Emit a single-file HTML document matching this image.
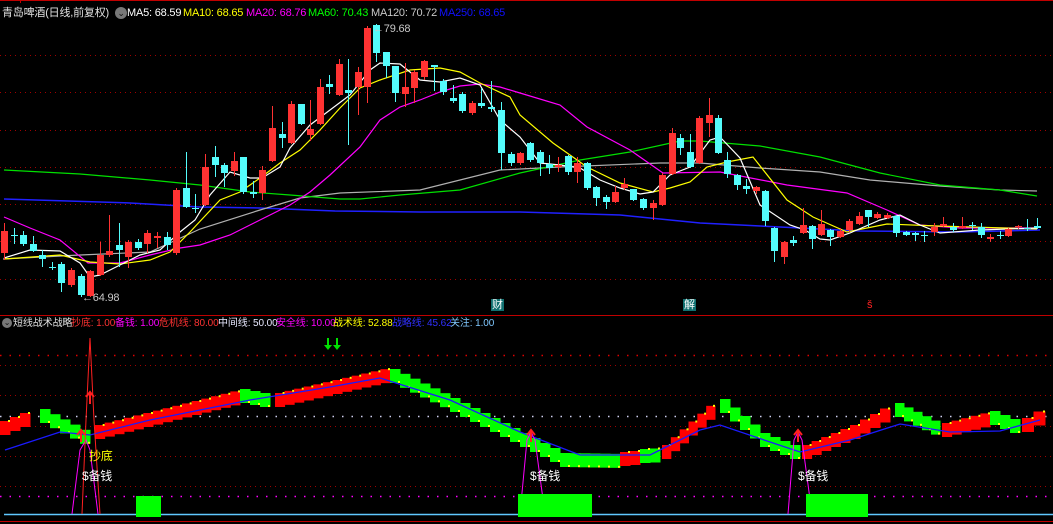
<!DOCTYPE html>
<html><head><meta charset="utf-8"><style>
html,body{margin:0;padding:0;background:#000;}
#w{position:relative;width:1053px;height:524px;overflow:hidden;background:#000;font-family:"Liberation Sans","Noto Sans CJK SC",sans-serif;font-size:11px;}
.t{position:absolute;white-space:nowrap;line-height:13px;letter-spacing:-0.2px;}
.b{font-size:10px;letter-spacing:-0.1px;}
svg{position:absolute;left:0;top:0;}
</style></head><body><div id="w">
<svg id="s" width="1053" height="524" viewBox="0 0 1053 524">
<line x1="0" y1="0.5" x2="1053" y2="0.5" stroke="#c00000"/>
<line x1="20.5" y1="0" x2="20.5" y2="3" stroke="#c00000"/>
<line x1="0" y1="315.5" x2="1053" y2="315.5" stroke="#c00000"/>
<line x1="0" y1="521.5" x2="1053" y2="521.5" stroke="#c00000"/>
<g stroke="#a00000" stroke-dasharray="1,4">
<line x1="0" y1="55.5" x2="1053" y2="55.5"/><line x1="0" y1="92.5" x2="1053" y2="92.5"/>
<line x1="0" y1="130.5" x2="1053" y2="130.5"/><line x1="0" y1="167.5" x2="1053" y2="167.5"/>
<line x1="0" y1="204.5" x2="1053" y2="204.5"/><line x1="0" y1="241.5" x2="1053" y2="241.5"/>
<line x1="0" y1="279.5" x2="1053" y2="279.5"/>
<line x1="0" y1="365.5" x2="1053" y2="365.5"/><line x1="0" y1="395.5" x2="1053" y2="395.5"/>
<line x1="0" y1="426.5" x2="1053" y2="426.5"/><line x1="0" y1="456.5" x2="1053" y2="456.5"/>
<line x1="0" y1="486.5" x2="1053" y2="486.5"/>
</g>
<line x1="0" y1="355.5" x2="1053" y2="355.5" stroke="#e00000" stroke-width="1.5" stroke-dasharray="1.5,8"/>
<line x1="0" y1="416.5" x2="1053" y2="416.5" stroke="#d0d0f0" stroke-width="1.5" stroke-dasharray="1.5,8"/>
<line x1="0" y1="496.5" x2="1053" y2="496.5" stroke="#ff00ff" stroke-width="1.5" stroke-dasharray="1.5,8"/>
<line x1="4" y1="514.5" x2="1053" y2="514.5" stroke="#60c8ff" stroke-width="1.5"/>
<g fill="#00e000"><path d="M327 338h2v7h3l-4 5-4-5h3z"/><path d="M336 338h2v7h3l-4 5-4-5h3z"/></g>
<g id="ma" fill="none" stroke-width="1.2"></g>
<g id="cd"></g>
<g id="bd"></g>
</svg>
<div class="t" style="left:2px;top:7px;color:#e0e0e0">青岛啤酒(日线,前复权)</div>
<div class="t" style="left:115px;top:7px;width:12px;height:12px;border-radius:6px;background:#777;color:#111;font-size:9px;text-align:center;line-height:12px">⌄</div>
<div class="t" style="left:127px;top:7px;color:#fff">MA5: 68.59</div>
<div class="t" style="left:183px;top:7px;color:#ff0">MA10: 68.65</div>
<div class="t" style="left:246px;top:7px;color:#f0f">MA20: 68.76</div>
<div class="t" style="left:308px;top:7px;color:#0f0">MA60: 70.43</div>
<div class="t" style="left:371px;top:7px;color:#c8c8c8">MA120: 70.72</div>
<div class="t" style="left:439px;top:7px;color:#1010ff">MA250: 68.65</div>
<div class="t" style="left:373px;top:23px;color:#c8c8c8">←79.68</div>
<div class="t" style="left:82px;top:292px;color:#c8c8c8">←64.98</div>
<div class="t" style="left:491px;top:299px;background:#107070;color:#fff;font-size:11px;line-height:12px;padding:0 1px">财</div>
<div class="t" style="left:683px;top:299px;background:#107070;color:#fff;font-size:11px;line-height:12px;padding:0 1px">解</div>
<div class="t" style="left:867px;top:299px;color:#f22;font-size:11px;line-height:12px">š</div>
<div class="t" style="left:2px;top:318px;width:10px;height:10px;border-radius:5px;background:#777;color:#111;font-size:8px;text-align:center;line-height:10px">⌄</div>
<div class="t b" style="left:13px;top:317px;color:#e0e0e0">短线战术战略</div>
<div class="t b" style="left:71px;top:317px;color:#ff3232">抄底: 1.00</div>
<div class="t b" style="left:115px;top:317px;color:#ff00ff">备钱: 1.00</div>
<div class="t b" style="left:159px;top:317px;color:#ff3232">危机线: 80.00</div>
<div class="t b" style="left:218px;top:317px;color:#e8e8ff">中间线: 50.00</div>
<div class="t b" style="left:276px;top:317px;color:#ff00ff">安全线: 10.00</div>
<div class="t b" style="left:333px;top:317px;color:#ff0">战术线: 52.88</div>
<div class="t b" style="left:392px;top:317px;color:#3030ff">战略线: 45.62</div>
<div class="t b" style="left:450px;top:317px;color:#80c8ff">关注: 1.00</div>
<div class="t" style="left:89px;top:450px;color:#ff0;font-size:12px">抄底</div>
<div class="t" style="left:82px;top:470px;color:#fff;font-size:12px">$备钱</div>
<div class="t" style="left:530px;top:470px;color:#fff;font-size:12px">$备钱</div>
<div class="t" style="left:798px;top:470px;color:#fff;font-size:12px">$备钱</div>
</div>
<script>
var NS="http://www.w3.org/2000/svg";
function el(p,t,a){var e=document.createElementNS(NS,t);for(var k in a)e.setAttribute(k,a[k]);p.appendChild(e);return e;}
var ma=document.getElementById('ma'),cd=document.getElementById('cd'),bd=document.getElementById('bd');
function pl(col,pts,w){el(ma,'polyline',{points:pts,stroke:col,'stroke-width':w||1.2});}
pl('#2020ff','4,199 130,203 200,207 260,208 335,211 420,212 520,212 620,215 700,223 780,227 860,231 960,232 1040,230',1.5);
pl('#b0b0b0','3,259 80,255 150,252 200,229 260,210 300,198 340,193 420,190 500,170 560,167 660,163 700,163 760,168 820,172 870,180 940,186 1000,190 1037,191');
pl('#00e000','4,170 80,174 150,180 200,185 250,192 290,195 340,199 360,199 400,195 460,190 520,173 580,160 630,152 680,141 700,141 760,146 820,157 880,173 940,185 1000,190 1037,196');
pl('#ff00ff','4,217 30,228 60,240 88,263 120,263 150,255 180,248 200,245 230,235 260,220 290,205 310,192 330,175 360,147 380,120 400,107 420,100 440,92 460,86 480,84 500,87 520,93 560,105 587,127 630,150 663,173 720,172 787,185 847,193 887,210 920,225 960,228 1037,228');
pl('#ffff00','4,259 60,255 90,262 120,264 150,260 170,252 190,232 220,200 240,192 260,178 280,163 300,150 320,130 340,108 360,88 380,80 410,70 440,68 460,72 480,83 510,97 520,115 553,143 587,167 620,183 653,192 670,188 690,182 707,167 727,162 753,157 787,200 813,217 847,232 887,224 937,226 1037,229');
pl('#ffffff','4,258 30,250 60,251 80,263 90,277 100,275 120,265 140,255 160,250 180,232 195,220 210,195 230,172 250,178 262,178 280,167 290,148 310,125 330,110 350,95 370,70 380,63 400,64 420,80 440,82 460,78 480,85 500,120 520,137 540,163 560,165 580,168 600,180 620,188 640,194 653,192 670,175 690,167 710,140 720,137 740,158 760,205 790,225 805,230 820,239 830,240 850,233 880,220 900,215 920,225 940,233 980,230 1037,228');
var C=[[4,231,253,223,260,1],[14,235,236,228,244,0],[23,235,244,231,246,0],[33,244,251,236,252,0],[42,255,259,250,267,0],[52,267,268,262,270,0],[61,264,283,262,292,0],[71,270,285,268,287,1],[81,276,295,274,297,0],[90,271,296,270,297,1],[100,255,275,242,276,1],[109,251,255,215,257,1],[119,245,250,223,267,0],[128,242,257,240,268,1],[138,242,248,239,250,0],[147,233,244,230,253,1],[157,236,238,232,248,1],[167,237,245,232,250,0],[176,190,253,188,255,1],[186,188,207,152,208,0],[195,208,209,194,213,0],[205,167,205,154,206,1],[215,157,165,146,177,0],[224,165,173,163,187,0],[234,161,171,152,176,1],[243,157,192,157,194,0],[253,192,194,181,198,0],[262,170,193,166,200,1],[272,128,161,106,162,1],[282,134,138,122,148,0],[291,104,143,101,144,1],[301,104,124,104,125,0],[310,129,135,100,141,1],[320,87,124,79,125,1],[329,84,87,75,94,0],[339,64,95,59,96,1],[348,90,93,59,145,0],[358,72,87,67,115,1],[367,28,87,26,103,1],[376,25,53,24,62,0],[386,52,66,52,78,0],[395,66,93,66,102,0],[405,87,94,63,107,1],[414,72,88,70,103,1],[424,61,77,60,80,1],[434,65,67,65,91,0],[443,81,92,79,95,0],[453,98,101,85,103,0],[462,94,111,92,113,0],[472,103,113,101,115,1],[481,103,106,88,108,0],[491,107,109,81,112,0],[501,110,153,102,170,0],[511,154,163,152,166,0],[520,153,163,152,165,1],[530,143,160,142,162,0],[540,152,163,150,176,0],[549,164,168,155,174,0],[558,165,167,157,172,1],[568,156,172,155,175,0],[577,163,172,157,183,1],[587,163,188,162,190,0],[596,187,198,186,206,0],[606,197,202,195,209,0],[615,192,202,186,203,1],[624,184,188,178,190,1],[633,189,200,189,201,0],[643,199,208,198,210,0],[653,203,208,200,220,1],[662,175,205,173,206,1],[672,133,174,128,175,1],[680,138,148,134,155,0],[690,152,167,134,168,0],[699,118,163,116,164,1],[709,115,123,98,137,1],[718,118,153,115,154,0],[727,160,174,152,178,0],[737,175,185,174,190,0],[746,186,189,179,194,0],[756,187,191,186,194,1],[765,191,221,190,226,0],[774,228,251,227,262,0],[784,242,257,241,264,1],[793,240,243,236,246,0],[803,225,233,208,234,1],[812,226,239,225,249,0],[821,224,235,210,236,1],[830,230,237,229,246,0],[840,231,237,228,238,1],[849,221,230,219,232,1],[859,216,224,212,225,1],[868,210,217,210,227,0],[877,214,218,212,219,1],[887,215,218,213,219,1],[896,216,233,215,237,0],[906,232,235,231,236,0],[915,233,235,232,241,0],[924,235,236,231,242,0],[934,227,232,223,236,1],[943,224,226,217,227,1],[953,227,230,223,232,0],[962,226,228,217,229,1],[972,225,226,222,230,0],[981,227,235,223,238,0],[990,237,239,234,242,1],[1000,235,236,231,239,0],[1008,229,236,228,237,1],[1018,226,227,225,229,1],[1027,228,229,219,231,0],[1037,226,228,218,229,0]];
C.forEach(function(c){var col=c[5]?'#ff3232':'#54fcfc';
el(cd,'line',{x1:c[0]+.5,y1:c[3],x2:c[0]+.5,y2:c[4],stroke:col});
el(cd,'rect',{x:c[0]-3,y:c[1],width:7,height:Math.max(1,c[2]-c[1]),fill:col});});
var B=[[0,428,'r'],[30,416,'r'],[40,416,'g'],[90,442,'g'],[95,432,'r'],[240,396,'r'],[240,396,'g'],[270,402,'g'],[275,400,'r'],[390,374,'r'],[390,376,'g'],[450,405,'g'],[520,440,'g'],[560,460,'g'],[620,461,'g'],[620,459,'r'],[640,457,'r'],[640,456,'g'],[660,455,'g'],[662,452,'r'],[715,405,'r'],[720,406,'g'],[760,440,'g'],[800,456,'g'],[802,452,'r'],[850,432,'r'],[890,410,'r'],[895,410,'g'],[940,432,'g'],[942,430,'r'],[990,418,'r'],[990,418,'g'],[1020,430,'g'],[1022,425,'r'],[1045,412,'r']];
for(var i=0;i<B.length-1;i++){var a=B[i],b=B[i+1];if(a[2]!=b[2])continue;
var col=a[2]=='r'?'#ff0000':'#00ff00';
var n=Math.max(1,Math.round((b[0]-a[0])/9.5));
for(var k=0;k<n;k++){var x=a[0]+(b[0]-a[0])*k/n,y=a[1]+(b[1]-a[1])*k/n;
el(bd,'rect',{x:x,y:y-7,width:(b[0]-a[0])/n+0.5,height:14,fill:col});
el(bd,'rect',{x:x+(b[0]-a[0])/n-2,y:y+(b[1]>a[1]?5:-8),width:2,height:2,fill:'#ff0'});}}
el(bd,'polyline',{points:'5,450 60,432 90,435 150,420 250,400 330,387 380,378 450,400 520,432 580,455 650,455 700,430 720,425 770,442 800,452 850,440 900,424 950,432 1000,431 1040,420',fill:'none',stroke:'#1a1aff','stroke-width':1.3});
el(bd,'polyline',{points:'72,514 80,450 86,440 90,450 98,514',fill:'none',stroke:'#ff00ff'});
el(bd,'polyline',{points:'82,514 86,420 90,338 94,420 100,514',fill:'none',stroke:'#ff2020'});
el(bd,'polyline',{points:'520,514 527,440 531,432 535,440 545,514',fill:'none',stroke:'#ff00ff'});
el(bd,'polyline',{points:'788,514 794,440 798,432 802,440 812,514',fill:'none',stroke:'#ff00ff'});
[[90,392],[81,430],[531,430],[798,430]].forEach(function(p){el(bd,'path',{d:'M'+(p[0]-4)+' '+(p[1]+5)+' L'+p[0]+' '+p[1]+' L'+(p[0]+4)+' '+(p[1]+5)+' M'+p[0]+' '+p[1]+' V'+(p[1]+12),stroke:'#ff2020','stroke-width':2,fill:'none'});});
el(bd,'rect',{x:136,y:496,width:25,height:21,fill:'#00ff00'});
el(bd,'rect',{x:518,y:494,width:74,height:23,fill:'#00ff00'});
el(bd,'rect',{x:806,y:494,width:62,height:23,fill:'#00ff00'});
</script>
</body></html>
